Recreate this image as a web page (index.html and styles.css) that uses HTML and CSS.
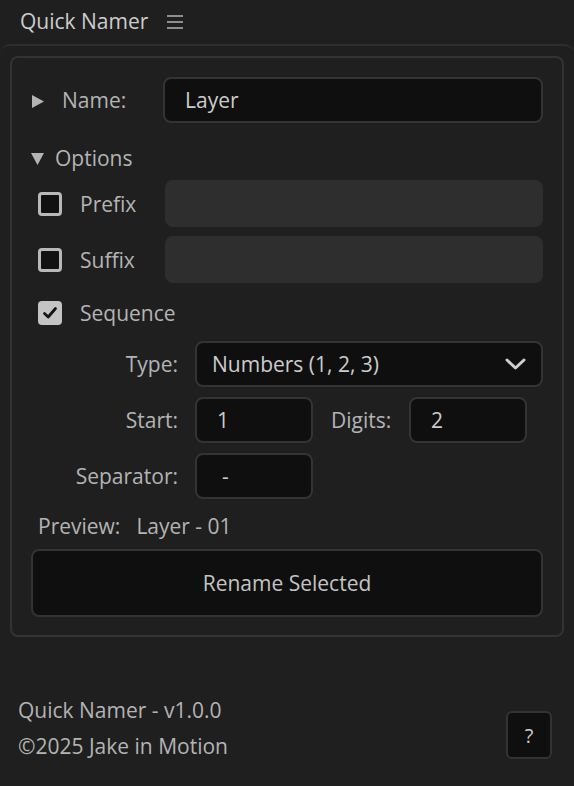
FILE: index.html
```html
<!DOCTYPE html>
<html>
<head>
<meta charset="utf-8">
<link rel="stylesheet" href="styles.css">
</head>
<body>
<div class="header">
  <span class="title">Quick Namer</span>
  <svg class="menu" width="16" height="14" viewBox="0 0 16 14"><path d="M0 1h16M0 7h16M0 13h16" stroke="#b4b4b4" stroke-width="1.6" fill="none"/></svg>
</div>
<div class="frame">
  <div class="panel">
    <div class="row name-row">
      <div class="name-label">
        <svg class="tri" width="12" height="13" viewBox="0 0 12 13"><path d="M0 0L12 6.5L0 13Z" fill="#b4b4b4"/></svg>
        <span class="label">Name:</span>
      </div>
      <div class="input input-name">Layer</div>
    </div>
    <div class="row options-row">
      <svg class="tri-down" width="13" height="12" viewBox="0 0 13 12"><path d="M0 0H13L6.5 12Z" fill="#b4b4b4"/></svg>
      <span class="label">Options</span>
    </div>
    <div class="row check-row prefix-row">
      <span class="checkbox"></span>
      <span class="label check-label">Prefix</span>
      <div class="input disabled"></div>
    </div>
    <div class="row check-row suffix-row">
      <span class="checkbox"></span>
      <span class="label check-label">Suffix</span>
      <div class="input disabled"></div>
    </div>
    <div class="row seq-row">
      <span class="checkbox checked"><svg width="18" height="18" viewBox="0 0 18 18"><path d="M3.5 9.5L7.2 13L14.5 4.5" stroke="#141414" stroke-width="2.8" fill="none" stroke-linecap="round" stroke-linejoin="round"/></svg></span>
      <span class="label check-label">Sequence</span>
    </div>
    <div class="row field-row type-row">
      <span class="label field-label">Type:</span>
      <div class="input select">
        <span>Numbers (1, 2, 3)</span>
        <svg class="chev" width="21" height="12" viewBox="0 0 21 12"><path d="M2 2L10.5 10L19 2" stroke="#cfcfcf" stroke-width="3" fill="none" stroke-linecap="round" stroke-linejoin="round"/></svg>
      </div>
    </div>
    <div class="row field-row start-row">
      <span class="label field-label">Start:</span>
      <div class="input small">1</div>
      <span class="label digits-label">Digits:</span>
      <div class="input small">2</div>
    </div>
    <div class="row field-row sep-row">
      <span class="label field-label">Separator:</span>
      <div class="input small sep">-</div>
    </div>
    <div class="row preview-row">
      <span class="label">Preview:</span>
      <span class="label preview-value">Layer - 01</span>
    </div>
    <div class="button">Rename Selected</div>
  </div>
  <div class="footer">
    <div class="footer-text">
      <div>Quick Namer - v1.0.0</div>
      <div>©2025 Jake in Motion</div>
    </div>
    <div class="help">?</div>
  </div>
</div>
</body>
</html>
```
FILE: styles.css
```css
html, body {
  margin: 0;
  padding: 0;
  background: #1f1f1f;
  height: 786px;
  overflow: hidden;
}
body {
  font-family: "Open Sans", "Noto Sans", sans-serif;
  font-size: 21px;
  color: #b4b4b4;
}
.header {
  height: 44px;
  display: flex;
  align-items: center;
  padding-left: 20px;
  box-sizing: border-box;
  padding-bottom: 2px;
}
.title {
  color: #cdcdcd;
  font-size: 21px;
}
.menu {
  margin-left: 19px;
  margin-top: 1px;
}
.frame {
  border-top: 2px solid #2e2e2e;
  border-radius: 10px 10px 0 0;
  padding: 10px 10px 0 10px;
  height: 760px;
  box-sizing: border-box;
}
.panel {
  border: 2px solid #333333;
  border-radius: 8px;
  padding: 19px 19px 18px 20px;
  display: flex;
  flex-direction: column;
}
.row {
  display: flex;
  align-items: center;
}
.label {
  line-height: 24px;
  white-space: nowrap;
}
.input {
  box-sizing: border-box;
  background: #0f0f0f;
  border: 2px solid #333333;
  border-radius: 8px;
  color: #cccccc;
  display: flex;
  align-items: center;
}
.name-row { height: 46px; }
.name-label {
  display: flex;
  align-items: center;
  width: 131px;
}
.tri { margin-right: 18px; margin-top: 2px; }
.input-name {
  flex: 1;
  height: 46px;
  padding-left: 20px;
}
.options-row {
  margin-top: 23px;
  height: 24px;
}
.tri-down { margin-left: -1px; margin-right: 11px; margin-top: 2px; }
.check-row { height: 47px; }
.prefix-row { margin-top: 10px; }
.suffix-row { margin-top: 9px; }
.checkbox {
  box-sizing: border-box;
  width: 24px;
  height: 24px;
  margin-left: 6px;
  border: 3px solid #b8b8b8;
  border-radius: 4px;
  background: #111111;
  display: flex;
  align-items: center;
  justify-content: center;
}
.checkbox.checked {
  background: #c4c4c4;
  border-color: #c4c4c4;
}
.check-label { margin-left: 18px; width: 85px; }
.disabled {
  flex: 1;
  height: 47px;
  background: #2e2e2e;
  border: none;
}
.seq-row {
  margin-top: 18px;
  height: 24px;
}
.field-row { height: 46px; margin-top: 10px; }
.type-row { margin-top: 16px; }
.field-label {
  width: 146px;
  text-align: right;
  margin-right: 17px;
}
.select {
  flex: 1;
  height: 46px;
  padding-left: 15px;
  padding-right: 15px;
  justify-content: space-between;
}
.small {
  width: 118px;
  height: 46px;
  padding-left: 20px;
}
.sep { padding-left: 25px; }
.digits-label { margin-left: 18px; width: 78px; }
.preview-row {
  margin-top: 15px;
  height: 24px;
  padding-left: 6px;
}
.preview-value { margin-left: 16px; }
.button {
  margin-top: 11px;
  height: 68px;
  box-sizing: border-box;
  background: #0f0f0f;
  border: 2px solid #333333;
  border-radius: 8px;
  display: flex;
  align-items: center;
  justify-content: center;
  color: #c4c4c4;
  margin-left: -1px;
}
.footer {
  margin-top: 55px;
  display: flex;
  justify-content: space-between;
  align-items: flex-end;
  padding-left: 8px;
  padding-right: 12px;
}
.footer-text {
  line-height: 36px;
}
.help {
  box-sizing: border-box;
  width: 46px;
  height: 48px;
  margin-bottom: 5px;
  background: #0f0f0f;
  border: 2px solid #333333;
  border-radius: 6px;
  display: flex;
  align-items: center;
  justify-content: center;
  color: #cccccc;
  font-size: 20px;
}
```
